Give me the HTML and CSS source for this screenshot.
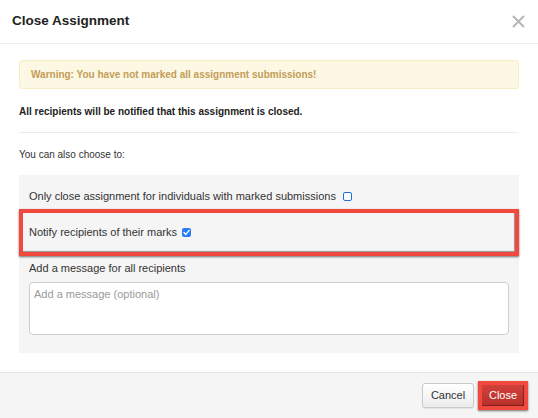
FILE: index.html
```html
<!DOCTYPE html>
<html lang="en">
<head>
<meta charset="utf-8">
<title>Close Assignment</title>
<link rel="stylesheet" href="styles.css">
</head>
<body>
<div class="modal">
  <div class="modal-header">
    <h1 class="modal-title">Close Assignment</h1>
    <span class="close-x" aria-label="Close">
      <svg width="13" height="13" viewBox="0 0 13 13"><path d="M1 1L12 12M12 1L1 12" stroke="#b4b4b4" stroke-width="1.8" fill="none"/></svg>
    </span>
  </div>
  <div class="modal-body">
    <div class="alert-warning">Warning: You have not marked all assignment submissions!</div>
    <p class="notice">All recipients will be notified that this assignment is closed.</p>
    <div class="divider"></div>
    <p class="choose">You can also choose to:</p>
    <div class="options">
      <div class="opt-row first">
        <span>Only close assignment for individuals with marked submissions</span>
        <span class="cb cb-empty"></span>
      </div>
      <div class="opt-row highlight">
        <span>Notify recipients of their marks</span>
        <span class="cb cb-checked"><svg width="9" height="9" viewBox="0 0 9 9"><path d="M2 4.6L3.8 6.4L7.2 2.4" stroke="#fff" stroke-width="1.4" fill="none" stroke-linecap="round" stroke-linejoin="round"/></svg></span>
      </div>
      <div class="msg-label">Add a message for all recipients</div>
      <textarea class="msg" placeholder="Add a message (optional)"></textarea>
    </div>
  </div>
  <div class="modal-footer">
    <button class="btn btn-default">Cancel</button>
    <button class="btn btn-danger">Close</button>
  </div>
</div>
</body>
</html>
```
FILE: styles.css
```css
html, body {
  margin: 0;
  padding: 0;
  background: #fff;
}
body {
  font-family: "Liberation Sans", Arial, Helvetica, sans-serif;
  color: #333;
  width: 538px;
  height: 418px;
  overflow: hidden;
}
.modal {
  display: flex;
  flex-direction: column;
  height: 418px;
}
.modal-header {
  height: 43px;
  border-bottom: 1px solid #ececec;
  display: flex;
  align-items: center;
  justify-content: space-between;
  padding: 0 13px 0 12px;
  flex: none;
}
.modal-title {
  margin: 0;
  font-size: 13.5px;
  font-weight: bold;
  color: #222;
  line-height: 16px;
  padding-bottom: 2px;
}
.close-x {
  display: flex;
  width: 13px;
  height: 13px;
  margin-top: -1px;
}
.modal-body {
  padding: 0 19px;
}
.alert-warning {
  margin-top: 16px;
  height: 27px;
  line-height: 27px;
  background: #fcf8e3;
  border: 1px solid #f8ecc6;
  border-radius: 3px;
  padding: 0 11px;
  font-size: 10px;
  font-weight: bold;
  color: #c49d58;
}
.notice {
  margin: 16px 0 0;
  font-size: 10px;
  font-weight: bold;
  line-height: 14px;
  color: #222;
}
.divider {
  margin-top: 13px;
  height: 1px;
  background: #ebebeb;
}
.choose {
  margin: 15px 0 0;
  font-size: 10px;
  line-height: 14px;
  color: #333;
}
.options {
  margin-top: 13px;
  background: #f5f5f5;
  padding: 14px 10px 18px;
  font-size: 11px;
  line-height: 14px;
  color: #333;
}
.opt-row {
  display: flex;
  align-items: center;
}
.highlight {
  margin: 6px -10px 0;
  border: 4px solid #f2493f;
  padding: 12px 6px 13px;
  box-shadow: 0 1px 2px rgba(0, 0, 0, 0.55), inset -1px -1px 1px rgba(0, 0, 0, 0.4);
}
.cb {
  display: inline-flex;
  align-items: center;
  justify-content: center;
  box-sizing: border-box;
  width: 9px;
  height: 9px;
  border-radius: 2px;
}
.cb-empty {
  margin-left: 7px;
  border: 1.5px solid #1f6fe0;
  background: #fff;
}
.cb-checked {
  margin-left: 5px;
  background: #2a7cf4;
}
.msg-label {
  margin-top: 5px;
}
.msg {
  display: block;
  margin-top: 7px;
  box-sizing: border-box;
  width: 100%;
  height: 53px;
  border: 1px solid #cfcfcf;
  border-radius: 4px;
  background: #fff;
  padding: 4px;
  resize: none;
  font-family: "Liberation Sans", Arial, sans-serif;
  font-size: 11px;
  line-height: 14px;
  color: #333;
}
.msg::placeholder {
  color: #9a9a9a;
}
.modal-footer {
  margin-top: 19px;
  flex: 1;
  background: #f5f5f5;
  border-top: 1px solid #e6e6e6;
  display: flex;
  align-items: center;
  justify-content: flex-end;
  gap: 4px;
  padding: 0 10px 0 0;
}
.btn {
  font-family: "Liberation Sans", Arial, sans-serif;
  font-size: 11px;
  line-height: 13px;
  margin: 0;
  cursor: pointer;
}
.btn-default {
  width: 52px;
  height: 25px;
  border: 1px solid #cacaca;
  border-radius: 3px;
  background: linear-gradient(#ffffff, #ececec);
  color: #333;
  padding: 0;
  box-shadow: 0 1px 1px rgba(0, 0, 0, 0.08);
}
.btn-danger {
  width: 50px;
  height: 29px;
  border: 4px solid #f2493f;
  border-radius: 0;
  background: linear-gradient(#d1403b, #b8302b);
  color: #fff;
  padding: 0;
  box-shadow: 0 1px 2px rgba(0, 0, 0, 0.55), inset -1px -1px 1px rgba(0, 0, 0, 0.35);
}
```
